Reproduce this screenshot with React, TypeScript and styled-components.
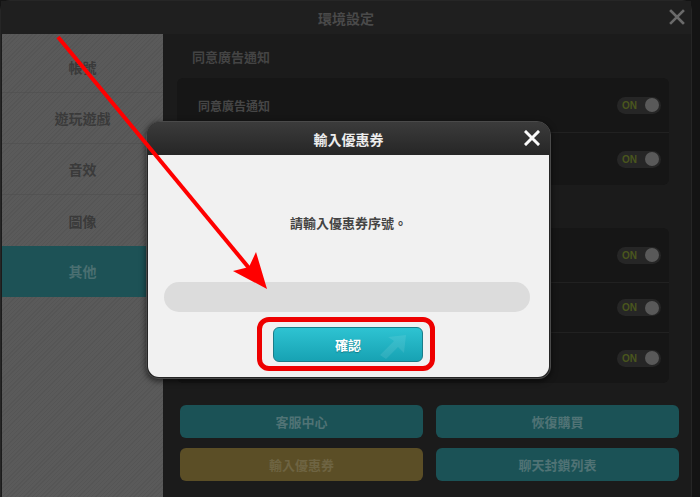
import styled, { createGlobalStyle } from "styled-components";

const GlobalStyle = createGlobalStyle`
  html, body {
    margin: 0;
    padding: 0;
    background: #141414;
  }
  body {
    font-family: "Noto Sans CJK TC", "Noto Sans", "Liberation Sans", sans-serif;
  }
  * {
    box-sizing: border-box;
  }
`;

const Screen = styled.div`
  position: relative;
  width: 700px;
  height: 497px;
  overflow: hidden;
`;

const Frame = styled.div`
  display: flex;
  flex-direction: column;
  width: 692px;
  height: 505px;
  background: #1b1b1b;
  border: 1px solid #262626;
  border-radius: 10px;
`;

const TopBar = styled.div`
  position: relative;
  display: flex;
  align-items: center;
  justify-content: center;
  height: 33px;
  flex-shrink: 0;
  background: #1f1f1f;
  color: #4a4a4a;
  font-size: 14px;
  font-weight: 700;
`;

const TopClose = styled.span`
  position: absolute;
  right: 6px;
  top: 8px;
  display: flex;
`;

const Body = styled.div`
  display: flex;
  flex: 1;
`;

const Sidebar = styled.div`
  display: flex;
  flex-direction: column;
  width: 161px;
  margin-left: 1px;
  padding-top: 8px;
  background-color: #5a5a5a;
  background-image: repeating-linear-gradient(
    135deg,
    rgba(0, 0, 0, 0.05) 0px,
    rgba(0, 0, 0, 0.05) 1px,
    transparent 1px,
    transparent 3px
  );
`;

const SideItem = styled.div<{ $active?: boolean }>`
  display: flex;
  align-items: center;
  justify-content: center;
  height: 51px;
  font-size: 14px;
  font-weight: 700;
  color: ${(p) => (p.$active ? "#4a6f71" : "#3a3a3a")};
  background: ${(p) => (p.$active ? "#1d5256" : "transparent")};
  border-bottom: 1px solid ${(p) => (p.$active ? "transparent" : "rgba(78,78,78,0.6)")};
  &:nth-child(4) {
    border-bottom: none;
  }
`;

const Content = styled.div`
  display: flex;
  flex-direction: column;
  flex: 1;
  padding: 14px 12px 0 14px;
`;

const SectionTitle = styled.div<{ $top?: number }>`
  height: 18px;
  line-height: 18px;
  margin: ${(p) => p.$top ?? 0}px 0 ${(p) => (p.$top ? 13 : 12)}px 15px;
  font-size: 13px;
  font-weight: 700;
  color: #444;
`;

const Card = styled.div`
  display: flex;
  flex-direction: column;
  margin-right: 10px;
  background: #161616;
  border-radius: 6px;
`;

const Row = styled.div<{ $h: number }>`
  display: flex;
  align-items: center;
  justify-content: space-between;
  height: ${(p) => p.$h}px;
  padding: 0 8px 0 21px;
  border-bottom: 1px solid #212121;
  font-size: 12px;
  font-weight: 700;
  color: #464646;
  &:last-child {
    border-bottom: none;
  }
`;

const Toggle = styled.div`
  display: flex;
  align-items: center;
  justify-content: space-between;
  width: 44px;
  height: 17px;
  padding: 0 2px 0 5px;
  border-radius: 9px;
  background: #262626;
  font-family: "Liberation Sans", sans-serif;
  font-size: 10px;
  font-weight: 700;
  color: #4a561d;
`;

const Knob = styled.span`
  width: 14px;
  height: 14px;
  border-radius: 50%;
  background: #595959;
`;

const ButtonGrid = styled.div`
  display: grid;
  grid-template-columns: 1fr 1fr;
  column-gap: 13px;
  row-gap: 10px;
  margin: 22px 0 0 3px;
`;

const DimButton = styled.div<{ $tone: "teal" | "gold" }>`
  display: flex;
  align-items: center;
  justify-content: center;
  height: 33px;
  border-radius: 6px;
  font-size: 13px;
  font-weight: 700;
  background: ${(p) => (p.$tone === "gold" ? "#5b4e26" : "#1b5256")};
  color: ${(p) => (p.$tone === "gold" ? "#6e6442" : "#507375")};
`;

const Modal = styled.div`
  position: absolute;
  left: 146px;
  top: 121px;
  width: 405px;
  height: 258px;
  display: flex;
  flex-direction: column;
  background: #262626;
  border: 1px solid #4a4a4a;
  border-radius: 14px 14px 12px 12px;
  box-shadow: 0 2px 6px rgba(0, 0, 0, 0.6);
`;

const ModalHeader = styled.div`
  position: relative;
  display: flex;
  align-items: center;
  justify-content: center;
  height: 33px;
  flex-shrink: 0;
  background: linear-gradient(#3b3b3b, #262626);
  border-radius: 13px 13px 0 0;
  color: #ececec;
  font-size: 14px;
  font-weight: 700;
`;

const ModalClose = styled.span`
  position: absolute;
  right: 10px;
  top: 8px;
  display: flex;
`;

const ModalBody = styled.div`
  display: flex;
  flex-direction: column;
  align-items: center;
  flex: 1;
  margin: 0 1px 1px;
  padding-top: 59px;
  background: #f1f1f1;
  border-radius: 0 0 11px 11px;
`;

const Prompt = styled.div`
  height: 18px;
  line-height: 18px;
  font-size: 13px;
  font-weight: 700;
  color: #444;
`;

const Input = styled.div`
  width: 366px;
  height: 30px;
  margin-top: 50px;
  margin-right: 4px;
  border-radius: 15px;
  background: #dcdcdc;
`;

const Highlight = styled.div`
  margin-top: 5px;
  margin-right: 5px;
  padding: 5px 7px 4px 11px;
  border: 5px solid #ee0000;
  border-radius: 12px;
`;

const Confirm = styled.div`
  position: relative;
  display: flex;
  align-items: center;
  justify-content: center;
  width: 150px;
  height: 35px;
  overflow: hidden;
  border: 1px solid #1b7c88;
  border-radius: 6px;
  background: linear-gradient(#2ec3d2, #17a2b3);
  color: #fff;
  font-size: 13px;
  font-weight: 700;
  text-shadow: 0 1px 1px rgba(0, 80, 90, 0.5);
`;

const ConfirmDeco = styled.svg`
  position: absolute;
  right: 6px;
  top: 3px;
`;

const Annotation = styled.svg`
  position: absolute;
  left: 0;
  top: 0;
  pointer-events: none;
`;

const XIcon = ({ size, color, stroke }: { size: number; color: string; stroke: number }) => (
  <svg width={size} height={size} viewBox="0 0 16 16">
    <path d="M2 2 L14 14 M14 2 L2 14" stroke={color} strokeWidth={stroke} strokeLinecap="square" />
  </svg>
);

const menu = ["帳號", "遊玩遊戲", "音效", "圖像", "其他"];

export default function App() {
  return (
    <>
      <GlobalStyle />
      <Screen>
        <Frame>
          <TopBar>
            環境設定
            <TopClose>
              <XIcon size={16} color="#6a6a6a" stroke={2.6} />
            </TopClose>
          </TopBar>
          <Body>
            <Sidebar>
              {menu.map((m) => (
                <SideItem key={m} $active={m === "其他"}>
                  {m}
                </SideItem>
              ))}
            </Sidebar>
            <Content>
              <SectionTitle>同意廣告通知</SectionTitle>
              <Card>
                <Row $h={55}>
                  同意廣告通知
                  <Toggle>
                    ON
                    <Knob />
                  </Toggle>
                </Row>
                <Row $h={52}>
                  同意夜間廣告通知
                  <Toggle>
                    ON
                    <Knob />
                  </Toggle>
                </Row>
              </Card>
              <SectionTitle $top={12}>其他設定</SectionTitle>
              <Card>
                <Row $h={55}>
                  <span />
                  <Toggle>
                    ON
                    <Knob />
                  </Toggle>
                </Row>
                {[0, 1].map((i) => (
                  <Row key={i} $h={50}>
                    <span />
                    <Toggle>
                      ON
                      <Knob />
                    </Toggle>
                  </Row>
                ))}
              </Card>
              <ButtonGrid>
                <DimButton $tone="teal">客服中心</DimButton>
                <DimButton $tone="teal">恢復購買</DimButton>
                <DimButton $tone="gold">輸入優惠券</DimButton>
                <DimButton $tone="teal">聊天封鎖列表</DimButton>
              </ButtonGrid>
            </Content>
          </Body>
        </Frame>

        <Modal>
          <ModalHeader>
            輸入優惠券
            <ModalClose>
              <XIcon size={16} color="#fafafa" stroke={3} />
            </ModalClose>
          </ModalHeader>
          <ModalBody>
            <Prompt>請輸入優惠券序號。</Prompt>
            <Input />
            <Highlight>
              <Confirm>
                確認
                <ConfirmDeco width="40" height="28" viewBox="0 0 40 28">
                  <path d="M4 24 L18 10 L12 6 L30 4 L28 22 L22 16 L10 28 Z" fill="rgba(255,255,255,0.09)" />
                </ConfirmDeco>
              </Confirm>
            </Highlight>
          </ModalBody>
        </Modal>

        <Annotation width="700" height="497" viewBox="0 0 700 497">
          <line x1="58" y1="37" x2="249" y2="268" stroke="#ff0000" strokeWidth="4" />
          <polygon points="267,289 233,271 249,267 256,252" fill="#ff0000" />
        </Annotation>
      </Screen>
    </>
  );
}
